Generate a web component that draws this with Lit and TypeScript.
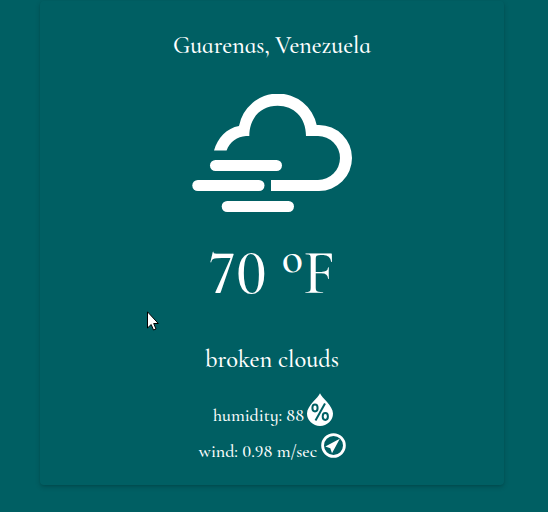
import { LitElement, html, css } from "lit";
import { customElement } from "lit/decorators.js";

@customElement("app-root")
export class AppRoot extends LitElement {
  static styles = css`
    :host {
      display: block;
      position: relative;
      box-sizing: border-box;
      height: 512px;
      padding: 1px 44px 0 40px;
      overflow: hidden;
      background: #005f63;
      color: #fff;
      font-family: "Cormorant Infant", "Liberation Serif", serif;
      font-weight: 500;
    }
    .card {
      box-sizing: border-box;
      height: 484px;
      padding-top: 29px;
      border-radius: 4px;
      display: flex;
      flex-direction: column;
      align-items: center;
      box-shadow: 0 2px 5px rgba(0, 0, 0, 0.18), 0 1px 2px rgba(0, 0, 0, 0.06);
      white-space: nowrap;
    }
    .city { font-size: 24px; line-height: 32px; letter-spacing: -0.03px; }
    .cloud { width: 160px; height: 118px; margin-top: 32px; fill: #fff; }
    .temp { font-size: 62.5px; line-height: 72px; margin-top: 25px; }
    .degree {
      font-size: 44px;
      line-height: 0;
      vertical-align: 21px;
    }
    .desc { font-size: 24.4px; line-height: 32px; margin-top: 34px; }
    .row {
      display: flex;
      align-items: flex-start;
      font-size: 18px;
      line-height: 24px;
    }
    .row span { margin-top: 10px; }
    .humidity { height: 40px; margin-top: 18px; padding-left: 2px; gap: 3px; }
    .wind { height: 39px; padding-left: 1px; gap: 4px; }
    .wind span { margin-top: 6px; }
    .drop { width: 26px; height: 33px; }
    .compass { width: 25px; height: 25px; }
    .cursor { position: absolute; left: 147px; top: 311px; width: 12px; height: 20px; }
  `;

  render() {
    return html`
      <section class="card">
        <div class="city">Guarenas, Venezuela</div>
        <svg class="cloud" viewBox="192 94 160 118">
          <path d="M214 150.6C217.500 138 227 128 239 126A39.600 39.600 0 0 1 316.700 125H319A33 33 0 0 1 319 191H271V180H318A22 22 0 0 0 318 136H306C306 117 293.500 105.800 277.600 105.800S249.300 117 249.300 136H246C237.500 136.500 229.500 142 226.600 150.600Z" />
          <rect x="210" y="160" width="72" height="11" rx="5.5" />
          <rect x="192.300" y="180" width="72.200" height="11" rx="5.5" />
          <rect x="221.700" y="201" width="72.300" height="11" rx="5.5" />
        </svg>
        <div class="temp">70 <span class="degree">o</span>F</div>
        <div class="desc">broken clouds</div>
        <div class="row humidity">
          <span>humidity: 88</span>
          <svg class="drop" viewBox="0 0 26 33">
            <path fill="#fff" d="M13 .3C11.500 4.500 0 13 0 20.500A13 12.500 0 0 0 26 20.500C26 13 14.500 4.500 13 .3Z" />
            <g fill="none" stroke="#005f63" stroke-width="2">
              <ellipse cx="8" cy="15" rx="2.600" ry="3.400" />
              <ellipse cx="18.300" cy="23.500" rx="2.600" ry="3.400" />
              <path d="M18 10.500L8.500 27.500" />
            </g>
          </svg>
        </div>
        <div class="row wind">
          <span>wind: 0.98 m/sec</span>
          <svg class="compass" viewBox="0 0 25 25">
            <circle cx="12.500" cy="12.500" r="10.900" fill="none" stroke="#fff" stroke-width="2.800" />
            <path fill="#fff" d="M18.800 5.800L4.300 13.500L9.300 15.200L11 20.300Z" />
          </svg>
        </div>
      </section>
      <svg class="cursor" viewBox="0 0 12 20">
        <path fill="#fff" stroke="#000" d="M.5 .8V17L4.200 13.500L6.500 19L9 18L6.700 12.500H11.300Z" />
      </svg>
    `;
  }
}
